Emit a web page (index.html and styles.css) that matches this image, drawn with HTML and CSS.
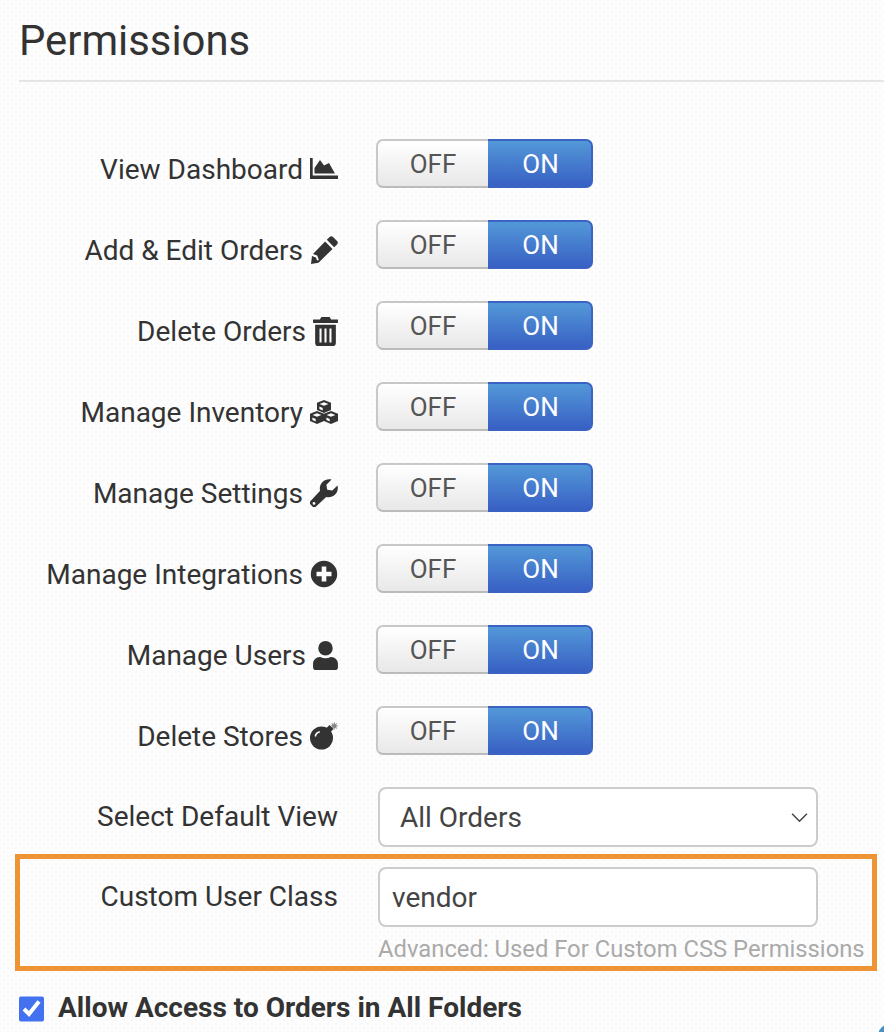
FILE: index.html
```html
<!DOCTYPE html>
<html>
<head>
  <meta charset="UTF-8">
  <title>Permissions</title>
  <link rel="stylesheet" href="styles.css">
</head>
<body>
  <div id="form">
    <h2 class="title">Permissions</h2>

    <div class="rows">
      <div class="row">
        <div class="label">View Dashboard
          <svg class="icon" viewBox="0 0 28 24"><path d="M0 1h2.700v17.500H28V22H0z"/><path d="M4.500 16.500V11L10 3l4 5.500L19 6l6 10.500z"/></svg>
        </div>
        <div class="toggle"><span class="off">OFF</span><span class="on">ON</span></div>
      </div>
      <div class="row">
        <div class="label">Add &amp; Edit Orders
          <svg class="icon" viewBox="0 0 28 28"><path d="M19.600 1a2.400 2.400 0 0 1 3.400 0l4 4a2.400 2.400 0 0 1 0 3.400l-2.800 2.800-7.400-7.400zM15.100 5.500l7.400 7.400L8.500 26.800 1 28l1-7.900 3.900 1.300 1.200 3.100 1.800-.5-1.700-4.500-4.200-1.500z"/></svg>
        </div>
        <div class="toggle"><span class="off">OFF</span><span class="on">ON</span></div>
      </div>
      <div class="row">
        <div class="label">Delete Orders
          <svg class="icon icon-tall" viewBox="0 0 24 28"><path d="M8 0h8l1.400 2.500H24v3.300H0V2.500h6.600zM2 7.500h20V25a3 3 0 0 1-3 3H5a3 3 0 0 1-3-3zm4.200 3.500v13.500h2V11zm4.800 0v13.500h2V11zm4.800 0v13.500h2V11z" fill-rule="evenodd"/></svg>
        </div>
        <div class="toggle"><span class="off">OFF</span><span class="on">ON</span></div>
      </div>
      <div class="row">
        <div class="label">Manage Inventory
          <svg class="icon" viewBox="0 0 28 24"><path d="M14 0l7 2.800V10l-7 3-7-3V2.800z"/><path d="M7 11l7 2.800V21l-7 3-7-3v-7.200z"/><path d="M21 11l7 2.800V21l-7 3-7-3v-7.200z"/><path fill="#fcfcfc" d="M14 2.200l4.400 1.700L14 5.800 9.600 3.900zM7 13.200l4.400 1.700L7 16.800l-4.400-1.900zM21 13.200l4.400 1.700-4.400 1.900-4.400-1.900zM2.400 17.500l3.300 1.400v2.500l-3.300-1.400zM16.400 17.500l3.300 1.400v2.500l-3.300-1.400zM9.400 6.500l3.300 1.400v2.500L9.400 9z"/></svg>
        </div>
        <div class="toggle"><span class="off">OFF</span><span class="on">ON</span></div>
      </div>
      <div class="row">
        <div class="label">Manage Settings
          <svg class="icon" viewBox="0 0 28 28"><path fill-rule="evenodd" d="M27.500 6.400c.9 3.200 0 6.700-2.400 9.100-2.400 2.400-5.800 3.200-8.900 2.400L6.300 27.200a2.900 2.900 0 0 1-4.100 0l-1.400-1.400a2.900 2.900 0 0 1 0-4.100l9.300-9.900C9.300 8.700 10.100 5.200 12.500 2.900 14.900.5 18.400-.4 21.600.5l-5.200 5.200.8 5.100 5.100.8zM4 23a1.400 1.400 0 1 0 0 2.800A1.400 1.400 0 0 0 4 23z"/></svg>
        </div>
        <div class="toggle"><span class="off">OFF</span><span class="on">ON</span></div>
      </div>
      <div class="row">
        <div class="label">Manage Integrations
          <svg class="icon" viewBox="0 0 28 28"><path fill-rule="evenodd" d="M14 .8a13.200 13.200 0 1 1 0 26.400A13.200 13.200 0 0 1 14 .8zm-2.300 5.700v5.200H6.500v4.600h5.200v5.200h4.600v-5.200h5.200v-4.600h-5.200V6.500z"/></svg>
        </div>
        <div class="toggle"><span class="off">OFF</span><span class="on">ON</span></div>
      </div>
      <div class="row">
        <div class="label">Manage Users
          <svg class="icon icon-tall" viewBox="0 0 24 28"><path d="M12 0a7 7 0 1 1 0 14 7 7 0 0 1 0-14zM7 15.500c1.500.8 3.200 1.200 5 1.200s3.500-.4 5-1.200h.5c3.600 0 6.500 2.900 6.500 6.500v3.500c0 1.400-1.100 2.500-2.500 2.500h-19C1.100 28 0 26.900 0 25.500V22c0-3.600 2.900-6.500 6.500-6.500z"/></svg>
        </div>
        <div class="toggle"><span class="off">OFF</span><span class="on">ON</span></div>
      </div>
      <div class="row">
        <div class="label">Delete Stores
          <svg class="icon" viewBox="0 0 28 28"><circle cx="11.500" cy="16" r="11.500"/><path d="M16 6.500l3.500-3.500 4 4-3.500 3.500z"/><path d="M5.300 14.500c.4-2.400 2.200-4.200 4.500-4.700" fill="none" stroke="#fcfcfc" stroke-width="1.600"/><path d="M23.500 2.400l.5-2.200h.7l.3 2.200 1.500-1.500.5.500-1.100 1.900 2.100.2v.8l-2.100.3 1.100 1.700-.5.500-1.700-1.200-.3 2.200h-.7l-.3-2.200-1.700 1.100-.4-.5 1.200-1.700-2-.3v-.7l2-.3-1.100-1.800.4-.4z" opacity=".6"/></svg>
        </div>
        <div class="toggle"><span class="off">OFF</span><span class="on">ON</span></div>
      </div>

      <div class="row row-field">
        <div class="label">Select Default View</div>
        <div class="select">
          <span>All Orders</span>
          <svg class="chevron" viewBox="0 0 16 10"><path d="M1 1.500l7 7 7-7" fill="none" stroke="#444" stroke-width="1.400"/></svg>
        </div>
      </div>
    </div>

    <div class="highlight">
      <div class="row-custom">
        <div class="label">Custom User Class</div>
        <div class="field">
          <input class="text-input" type="text" value="vendor">
          <div class="hint">Advanced: Used For Custom CSS Permissions</div>
        </div>
      </div>
    </div>

    <label class="check-row">
      <input class="check" type="checkbox" checked>
      <span>Allow Access to Orders in All Folders</span>
    </label>
  </div>
  <div class="corner"></div>
</body>
</html>
```

FILE: styles.css
```css
html, body { height: 1032px; overflow: hidden; }
body {
  margin: 0;
  color: #333;
  font-family: Roboto, "Liberation Sans", sans-serif;
  background-color: #fdfdfd;
  background-image:
    radial-gradient(#f7f7f7 1px, transparent 1.2px),
    radial-gradient(#f7f7f7 1px, transparent 1.2px);
  background-size: 8px 8px;
  background-position: 0 0, 4px 4px;
  position: relative;
}
#form { padding: 0 0 0 15px; }

.title {
  margin: 0 0 0 4px;
  height: 82px;
  box-sizing: border-box;
  padding-top: 17px;
  border-bottom: 2px solid #e5e5e5;
  font-size: 41.800px;
  line-height: 48px;
  font-weight: 400;
}

.rows { padding-top: 57px; }
.row {
  display: flex;
  align-items: flex-start;
  height: 81px;
}
.row-field { height: 68px; }

.label {
  width: 323px;
  display: flex;
  justify-content: flex-end;
  align-items: center;
  gap: 7px;
  padding-top: 12px;
  font-size: 28px;
  line-height: 38px;
  white-space: nowrap;
}
.icon { width: 28px; height: 28px; margin-bottom: 2px; fill: #333; flex: none; }
.icon-tall { width: 25px; height: 29px; }

.toggle {
  display: flex;
  width: 217px;
  height: 49px;
  margin-left: 38px;
  font-size: 26px;
  line-height: 47px;
  text-align: center;
}
.off {
  width: 110px;
  color: #555;
  border: 2px solid #c8c8c8;
  border-right: none;
  border-bottom-color: #bbb;
  border-radius: 7px 0 0 7px;
  background: linear-gradient(#fff, #e8e8e8);
}
.on {
  flex: 1;
  padding-left: 2px;
  color: #fff;
  border: 2px solid #3a63c4;
  border-left: none;
  border-radius: 0 7px 7px 0;
  background: linear-gradient(#5398d8, #3860c4);
}

.select {
  display: flex;
  align-items: center;
  justify-content: space-between;
  box-sizing: border-box;
  width: 440px;
  height: 60px;
  margin-left: 40px;
  padding: 0 8px 0 20px;
  background: #fff;
  border: 2px solid #ccc;
  border-radius: 8px;
  font-size: 28px;
  color: #444;
}
.chevron { width: 17px; height: 11px; }
.row-field .label { padding-top: 11px; }

.highlight {
  box-sizing: border-box;
  width: 862px;
  height: 117px;
  margin-top: -1px;
  border: 5px solid #ee9435;
}
.row-custom { display: flex; align-items: flex-start; }
.row-custom .label { width: 318px; padding-top: 19px; }
.field { margin-left: 40px; padding-top: 8px; }
.text-input {
  display: block;
  box-sizing: border-box;
  width: 440px;
  height: 60px;
  padding: 0 12px;
  background: #fff;
  border: 2px solid #ccc;
  border-radius: 8px;
  font-family: Roboto, "Liberation Sans", sans-serif;
  font-size: 28px;
  color: #444;
}
.hint {
  margin-top: 8px;
  font-size: 23.800px;
  line-height: 28px;
  color: #aaa;
  white-space: nowrap;
}

.check-row {
  display: flex;
  align-items: center;
  gap: 14px;
  margin: 20px 0 0 4px;
  font-size: 28px;
  font-weight: 700;
}
.check {
  width: 25px;
  height: 26px;
  margin: 2px 0 0;
  accent-color: #4372f0;
}

.corner {
  position: absolute;
  right: -18px;
  bottom: -16px;
  width: 24px;
  height: 24px;
  border-radius: 50%;
  background: #4a90c4;
}
```
